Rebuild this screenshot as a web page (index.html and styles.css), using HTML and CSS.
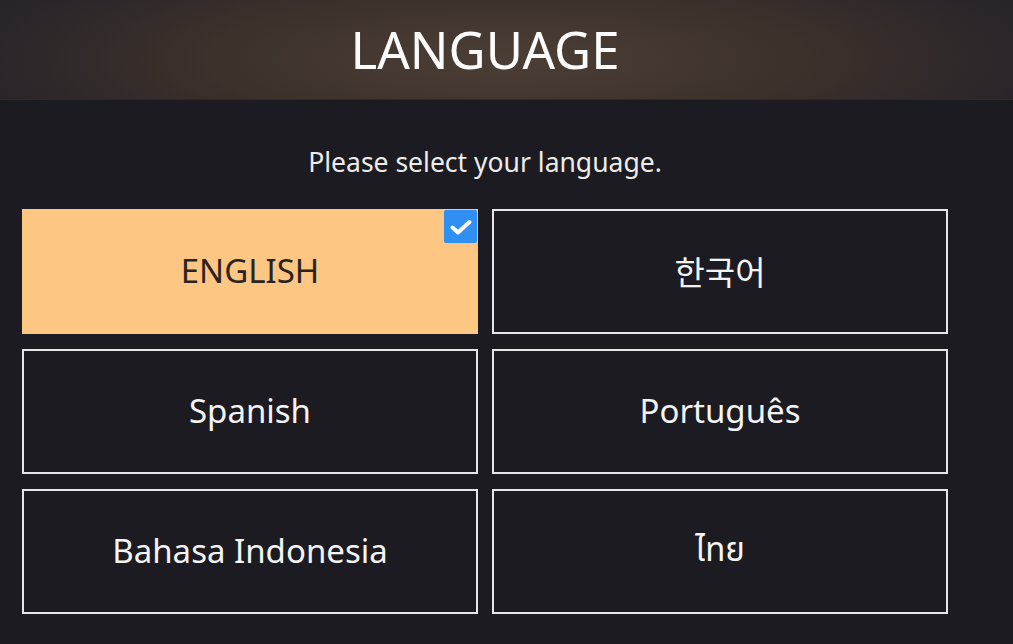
FILE: index.html
```html
<!DOCTYPE html>
<html lang="en">
<head>
<meta charset="utf-8">
<title>Language</title>
<link rel="stylesheet" href="styles.css">
</head>
<body>
<header class="header">
  <div class="wrap"><h1 class="title">LANGUAGE</h1></div>
</header>
<main class="wrap main">
  <p class="subtitle">Please select your language.</p>
  <div class="grid">
    <button class="option selected">ENGLISH
      <span class="check"><svg width="24" height="18" viewBox="0 0 24 18"><path d="M3.5 9.5 L9 14.5 L20.5 4" fill="none" stroke="#fff" stroke-width="4" stroke-linecap="round" stroke-linejoin="round"/></svg></span>
    </button>
    <button class="option" lang="ko">한국어</button>
    <button class="option">Spanish</button>
    <button class="option">Português</button>
    <button class="option">Bahasa Indonesia</button>
    <button class="option" lang="th">ไทย</button>
  </div>
</main>
</body>
</html>
```
FILE: styles.css
```css
html, body {
  margin: 0;
  padding: 0;
}
body {
  width: 1013px;
  height: 644px;
  overflow: hidden;
  background: #1c1b22;
  font-family: "Noto Sans", "Noto Sans Thai", "Noto Sans CJK KR", sans-serif;
  color: #f2f2f2;
}
.header {
  height: 100px;
  background: radial-gradient(ellipse 70% 160% at 50% 60%, #4b3e35 0%, #3d322b 40%, #2a252a 75%, #201e25 100%);
  border-bottom: 1px solid #2a2830;
  box-sizing: border-box;
}
.wrap {
  width: 926px;
  margin-left: 22px;
}
.title {
  margin: 0;
  padding-top: 17px;
  text-align: center;
  font-size: 51px;
  font-weight: 400;
  line-height: 64px;
  color: #fbfbfb;
}
.subtitle {
  margin: 0;
  padding-top: 44px;
  height: 65px;
  box-sizing: border-box;
  text-align: center;
  font-size: 26.5px;
  line-height: 36px;
  color: #ececec;
}
.grid {
  margin-top: 44px;
  display: grid;
  grid-template-columns: 456px 456px;
  grid-auto-rows: 125px;
  column-gap: 14px;
  row-gap: 15px;
}
.option {
  position: relative;
  margin: 0;
  padding: 0 0 2px;
  background: #1c1b22;
  border: 2px solid #e6e6e8;
  color: #f4f4f4;
  font-family: inherit;
  font-size: 33px;
  font-weight: 400;
  display: flex;
  align-items: center;
  justify-content: center;
}
.option.selected {
  background: #fdc683;
  border-color: #fdc683;
  color: #2a2420;
}
.check {
  position: absolute;
  top: -1px;
  right: -1px;
  width: 33px;
  height: 33px;
  background: #2f8ff2;
  border-radius: 2px;
  display: flex;
  align-items: center;
  justify-content: center;
}
```
